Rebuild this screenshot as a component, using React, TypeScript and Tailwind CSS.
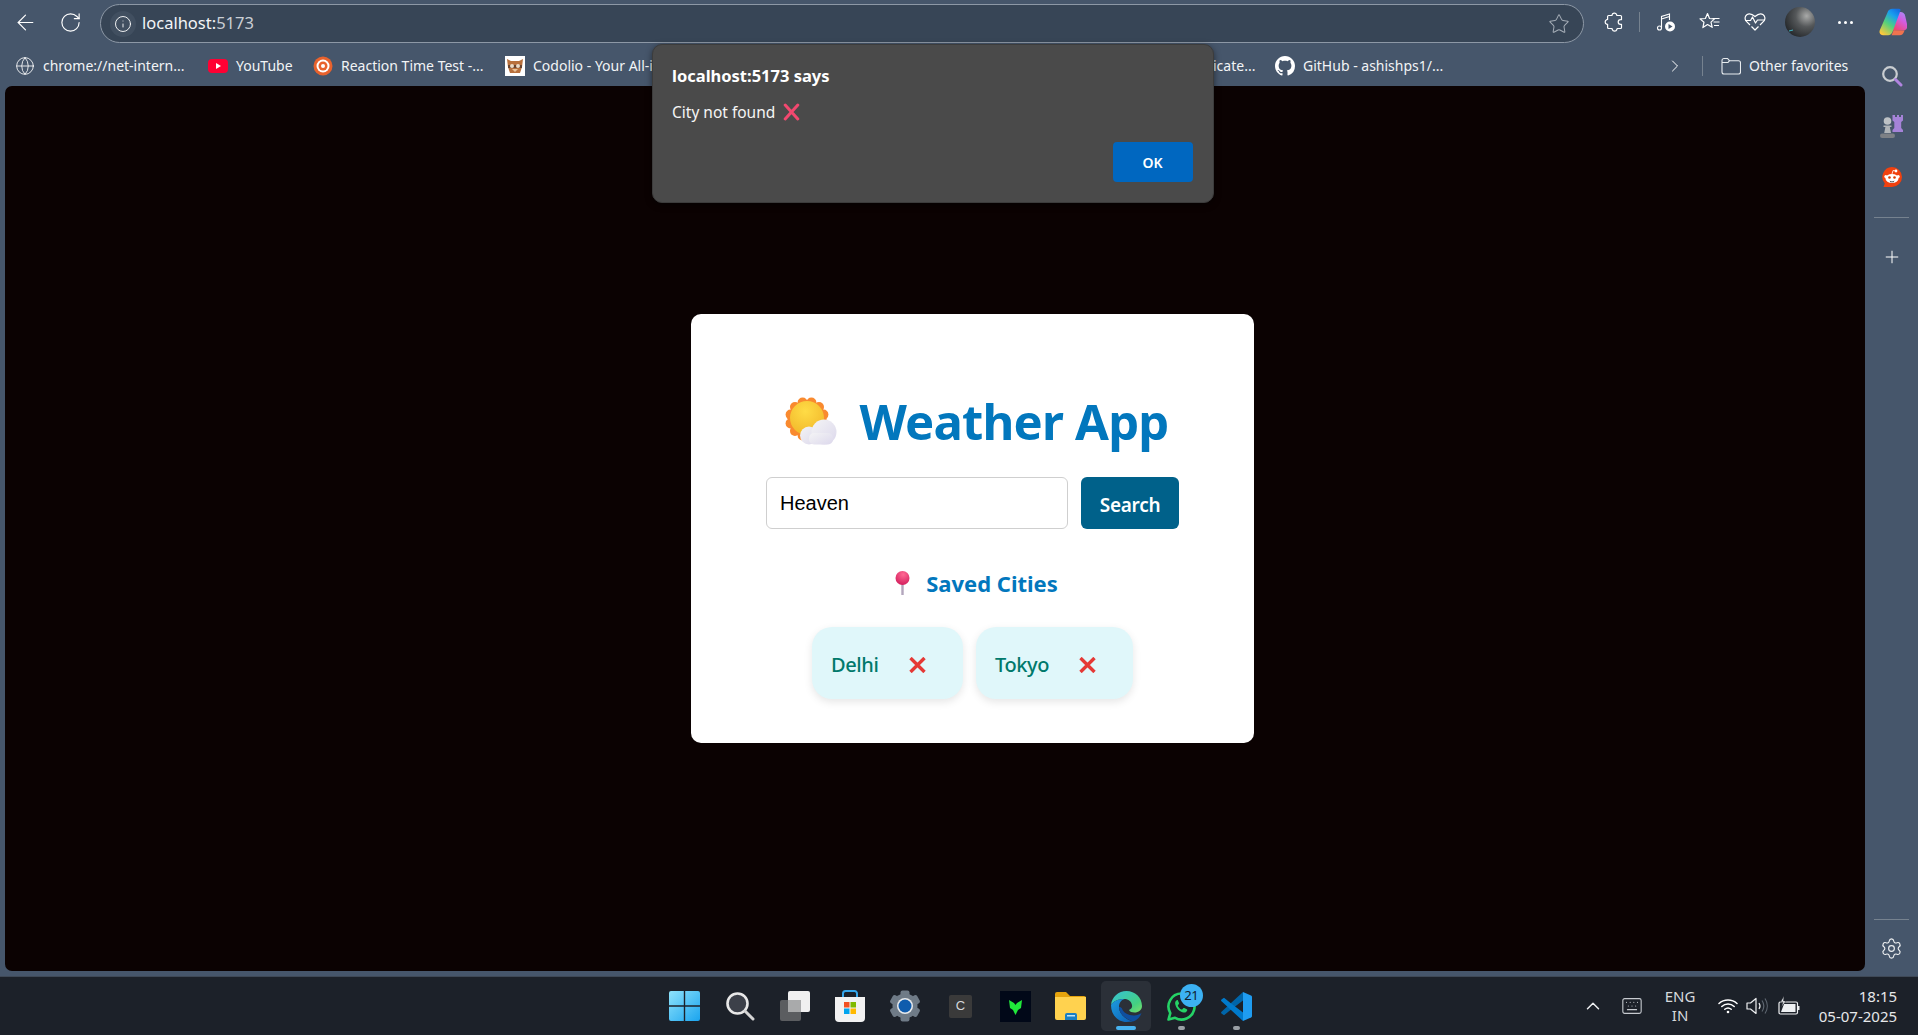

import React from "react";
import { ArrowLeft, RotateCw, Info, Star, Globe, ChevronRight, Plus, Settings, ChevronUp, Keyboard } from "lucide-react";

const ui = "font-['Noto_Sans','Open_Sans',sans-serif]";

function Bookmark({ icon, label, w }: { icon: React.ReactNode; label: string; w: string }) {
  return (
    <div className={`flex items-center gap-2 shrink-0 text-[14px] text-[#f2f4f6] whitespace-nowrap ${w}`}>
      <span className="w-5 h-5 flex items-center justify-center shrink-0">{icon}</span>
      <span>{label}</span>
    </div>
  );
}

function YouTube() {
  return (
    <svg width="20" height="20" viewBox="0 0 20 20">
      <rect x="0" y="3" width="20" height="14" rx="4" fill="#ff0033" />
      <path d="M8 7l5 3-5 3z" fill="#fff" />
    </svg>
  );
}
function Target() {
  return (
    <svg width="20" height="20" viewBox="0 0 20 20">
      <circle cx="10" cy="10" r="9.5" fill="#e8622d" />
      <circle cx="10" cy="10" r="6.5" fill="#fff" />
      <circle cx="10" cy="10" r="4.5" fill="#e8622d" />
      <circle cx="10" cy="10" r="2" fill="#fff" />
    </svg>
  );
}
function Owl() {
  return (
    <svg width="20" height="20" viewBox="0 0 20 20">
      <rect width="20" height="20" fill="#fff" />
      <path d="M2 3l4 2h8l4-2-1 8-2 6H5l-2-6z" fill="#b8703c" />
      <path d="M3 9h14v3H3z" fill="#6b4630" />
      <circle cx="7" cy="10" r="2" fill="#eadbc8" />
      <circle cx="13" cy="10" r="2" fill="#eadbc8" />
      <path d="M7 13h6l-3 3z" fill="#e9c39a" />
    </svg>
  );
}
function GitHub() {
  return (
    <svg width="20" height="20" viewBox="0 0 16 16" fill="#fff">
      <path d="M8 0C3.58 0 0 3.58 0 8c0 3.54 2.29 6.53 5.47 7.59.4.07.55-.17.55-.38 0-.19-.01-.82-.01-1.49-2.01.37-2.53-.49-2.69-.94-.09-.23-.48-.94-.82-1.13-.28-.15-.68-.52-.01-.53.63-.01 1.08.58 1.23.82.72 1.21 1.87.87 2.33.66.07-.52.28-.87.51-1.07-1.78-.2-3.64-.89-3.64-3.95 0-.87.31-1.59.82-2.15-.08-.2-.36-1.02.08-2.12 0 0 .67-.21 2.2.82.64-.18 1.32-.27 2-.27s1.36.09 2 .27c1.53-1.04 2.2-.82 2.2-.82.44 1.1.16 1.92.08 2.12.51.56.82 1.27.82 2.15 0 3.07-1.87 3.75-3.65 3.95.29.25.54.73.54 1.48 0 1.07-.01 1.93-.01 2.2 0 .21.15.46.55.38A8.01 8.01 0 0 0 16 8c0-4.42-3.58-8-8-8z" />
    </svg>
  );
}
function FolderLine() {
  return (
    <svg width="20" height="18" viewBox="0 0 20 18" fill="none" stroke="#e8ecef" strokeWidth="1.1">
      <path d="M1 3.5A2 2 0 0 1 3 1.5h3.5l2 2.2H17.5a2 2 0 0 1 2 2V15a2 2 0 0 1-2 2H3a2 2 0 0 1-2-2z" />
      <path d="M1 5.5h6l1.500-1.800" />
    </svg>
  );
}
function MusicPlay() {
  return (
    <svg width="20" height="20" viewBox="0 0 20 20" fill="none" stroke="#fff" strokeWidth="1.1">
      <circle cx="3.500" cy="16" r="2" />
      <path d="M5.500 16V4.500l8-2.500v6M5.500 7l8-2.500" />
      <circle cx="14" cy="14.500" r="5" fill="#fff" stroke="none" />
      <path d="M12.500 12l4 2.500-4 2.500z" fill="#46566b" stroke="none" />
    </svg>
  );
}
function StarList() {
  return (
    <svg width="22" height="20" viewBox="0 0 22 20" fill="none" stroke="#fff" strokeWidth="1.200">
      <path d="M8.500 1.500l2 5 5 .4-3.500 3.200 1.200 5.200-4.700-2.700-4.600 3 1.100-5.400L1 6.900l5.400-.4z" strokeLinejoin="round" />
      <path d="M13.500 6.500h7M14.500 10h6M15 13.500h5" />
    </svg>
  );
}
function HeartCheck() {
  return (
    <svg width="22" height="20" viewBox="0 0 22 20" fill="none" stroke="#fff" strokeWidth="1.200" strokeLinejoin="round">
      <path d="M6 13L2.200 9.200C0.500 7.200.8 4.200 2.800 2.700 5 1.200 8 1.800 11 4.500c3-2.700 6-3.300 8.200-1.800 2 1.500 2.300 4.500.6 6.500L16 13" />
      <path d="M1 8.500h5.500L8.500 5l3 6 2-3H21" />
      <path d="M7.500 14.500L11 18l3.500-3.500" />
    </svg>
  );
}
function Puzzle2() {
  return (
    <svg width="20" height="20" viewBox="0 0 20 20" fill="none" stroke="#fff" strokeWidth="1.200" strokeLinejoin="round">
      <path d="M8 3.200a2.400 2.400 0 0 1 4.600-.6l.3.9h3.600a1 1 0 0 1 1 1v3.100l-1 .1a2.300 2.300 0 0 0 0 4.600l1 .1v3.100a1 1 0 0 1-1 1h-3.400l-.2 1a2.400 2.400 0 0 1-4.600 0l-.3-1H4.600a1 1 0 0 1-1-1v-3.200l-1-.2a2.400 2.400 0 0 1 0-4.400l1-.2V4.500a1 1 0 0 1 1-1h3.400z" />
    </svg>
  );
}
function Avatar() {
  return (
    <svg width="30" height="30" viewBox="0 0 30 30">
      <defs>
        <radialGradient id="av" cx="0.72" cy="0.3" r="0.8">
          <stop offset="0" stopColor="#a9aaa9" />
          <stop offset="0.45" stopColor="#55585a" />
          <stop offset="1" stopColor="#25282b" />
        </radialGradient>
      </defs>
      <circle cx="15" cy="15" r="15" fill="url(#av)" />
      <path d="M4 24l4-1" stroke="#3fb6c4" strokeWidth="1" />
    </svg>
  );
}
function Copilot() {
  return (
    <svg width="28" height="28" viewBox="0 0 28 28">
      <defs>
        <linearGradient id="cpa" x1="0.2" y1="1" x2="0.8" y2="0">
          <stop offset="0" stopColor="#ffc83c" />
          <stop offset="0.4" stopColor="#56d17a" />
          <stop offset="0.75" stopColor="#18a0ee" />
          <stop offset="1" stopColor="#1470e6" />
        </linearGradient>
        <linearGradient id="cpb" x1="0.2" y1="1" x2="0.8" y2="0">
          <stop offset="0" stopColor="#f1456a" />
          <stop offset="0.6" stopColor="#d35ce0" />
          <stop offset="1" stopColor="#a78cf7" />
        </linearGradient>
      </defs>
      <path d="M19 4h2.500c2.500 0 4 1.500 4.700 4l2 9c.6 3-1 5.500-4 5.500H13z" fill="url(#cpb)" />
      <path d="M8.500 4.500C9.300 2 11 .8 13.500.8h6.300c1.500 0 2 .9 1.500 2.200L13.500 24c-.8 2-2.200 3.200-4.300 3.200H4C1.300 27.200 0 25 .7 22.500z" fill="url(#cpa)" />
      <path d="M12.500 27.200h8.300c2 0 3.200-1 4-3l.8-1.800-11-.2z" fill="#f0734f" />
    </svg>
  );
}
function SearchColor() {
  return (
    <svg width="22" height="22" viewBox="0 0 22 22" fill="none">
      <circle cx="9" cy="9" r="6.800" stroke="#c9cdd1" strokeWidth="2.200" />
      <path d="M14.500 14.500L20 20" stroke="#b184e0" strokeWidth="3" strokeLinecap="round" />
    </svg>
  );
}
function Chess() {
  return (
    <svg width="23" height="23" viewBox="0 0 23 23">
      <path d="M12.500 0h2.500v2h2V0h2v2h2V0h2v5.500l-1.800 1.500v6l1.800 2v2H12.500v-2l1.800-2V7l-1.800-1.500z" fill="#a583d8" />
      <circle cx="7.500" cy="6" r="3.800" fill="#bdc1c5" />
      <path d="M3.500 10.500h8v1.500H9.800l1.200 6H4.200l1.200-6H3.500z" fill="#b0b4b8" />
      <rect x="0" y="18.500" width="15" height="4.500" rx="2.200" fill="#7d8085" />
    </svg>
  );
}
function Reddit() {
  return (
    <svg width="20" height="20" viewBox="0 0 20 20">
      <path d="M10 0a10 10 0 0 1 0 20H1.500l1.300-3.500A10 10 0 0 1 10 0z" fill="#f1410f" />
      <ellipse cx="10" cy="11.500" rx="6.500" ry="4.500" fill="#fff" />
      <circle cx="3.800" cy="9.500" r="1.500" fill="#fff" />
      <circle cx="16.200" cy="9.500" r="1.500" fill="#fff" />
      <circle cx="14" cy="4" r="1.400" fill="#fff" />
      <path d="M10 7l1-3.500 3 .5" stroke="#fff" strokeWidth="0.800" fill="none" />
      <circle cx="7.500" cy="10.500" r="1.300" fill="#d93a00" />
      <circle cx="12.500" cy="10.500" r="1.300" fill="#d93a00" />
      <path d="M7.500 13.500c1.500 1.200 3.500 1.200 5 0l-1 1.800h-3z" fill="#333" />
    </svg>
  );
}
function AlertX() {
  return (
    <svg width="17" height="18" viewBox="0 0 17 18" fill="none" stroke="#f2486f" strokeWidth="3" strokeLinecap="round">
      <path d="M2.200 2l12.600 14M14.800 2L2.200 16" />
    </svg>
  );
}
function SunCloud() {
  const pts = Array.from({ length: 12 }, (_, i) => i * 30 + 15);
  return (
    <svg width="52" height="48" viewBox="0 0 52 48">
      <defs>
        <radialGradient id="sun" cx="0.45" cy="0.3" r="0.8">
          <stop offset="0" stopColor="#ffdc46" />
          <stop offset="1" stopColor="#f0b428" />
        </radialGradient>
        <linearGradient id="cl" x1="0" y1="0" x2="1" y2="1">
          <stop offset="0" stopColor="#f4f4f5" />
          <stop offset="1" stopColor="#dcd8ec" />
        </linearGradient>
      </defs>
      <g fill="#f98a2f">
        <circle cx="22" cy="22" r="18.500" />
        {pts.map((a) => (
          <circle key={a} cx={22 + 17 * Math.cos((a * Math.PI) / 180)} cy={22 + 17 * Math.sin((a * Math.PI) / 180)} r="5" />
        ))}
      </g>
      <circle cx="22" cy="21" r="17" fill="url(#sun)" />
      <g fill="url(#cl)">
        <circle cx="24" cy="38.500" r="9" />
        <circle cx="39" cy="35" r="12.500" />
        <rect x="24" y="36" width="24" height="11.500" rx="5" />
      </g>
    </svg>
  );
}
function Pin() {
  return (
    <svg width="17" height="24" viewBox="0 0 17 24">
      <defs>
        <radialGradient id="pin" cx="0.55" cy="0.25" r="0.8">
          <stop offset="0" stopColor="#ff6a94" />
          <stop offset="1" stopColor="#d11a5a" />
        </radialGradient>
      </defs>
      <rect x="7.300" y="10" width="2.400" height="14" fill="#b3a6bd" />
      <circle cx="8.500" cy="7" r="7" fill="url(#pin)" />
    </svg>
  );
}
function ChipX() {
  return (
    <svg width="17" height="16" viewBox="0 0 17 16" fill="none" stroke="#e53935" strokeWidth="3.400">
      <path d="M1.500 1l14 14M15.500 1l-14 14" />
    </svg>
  );
}

function Chip({ name, gap }: { name: string; gap: string }) {
  return (
    <div className={`h-[72px] pl-[19px] pt-[4px] rounded-[20px] bg-[#e0f7fa] flex items-center shadow-[0_3px_8px_rgba(0,0,0,0.1)] ${gap}`}>
      <span className="text-[20px] leading-none font-medium text-[#00796b] tracking-[-0.4px]">{name}</span>
      <ChipX />
    </div>
  );
}

function WinLogo() {
  return (
    <svg width="31" height="30" viewBox="0 0 31 30">
      <defs>
        <linearGradient id="wa" x1="0" y1="0" x2="1" y2="1">
          <stop offset="0" stopColor="#8fe3fb" />
          <stop offset="1" stopColor="#1aa4ef" />
        </linearGradient>
      </defs>
      <g fill="url(#wa)">
        <path d="M2 0h12.800v14.200H0V2a2 2 0 0 1 2-2zM16.200 0H29a2 2 0 0 1 2 2v12.200H16.200zM0 15.800h14.800V30H2a2 2 0 0 1-2-2zM16.200 15.800H31V28a2 2 0 0 1-2 2H16.200z" />
      </g>
    </svg>
  );
}
function TbSearch() {
  return (
    <svg width="30" height="30" viewBox="0 0 30 30" fill="none">
      <circle cx="12.500" cy="12.500" r="10" stroke="#e8e8e8" strokeWidth="2.600" fill="#3c4049" />
      <path d="M20 20l8 8" stroke="#d5d5d5" strokeWidth="3" strokeLinecap="round" />
    </svg>
  );
}
function TaskView() {
  return (
    <svg width="30" height="30" viewBox="0 0 30 30">
      <rect x="0" y="9" width="21" height="21" rx="2" fill="#5b5d60" />
      <rect x="8" y="0" width="22" height="21" rx="2" fill="#f0f0f0" />
      <rect x="8" y="9" width="13" height="12" fill="#a9aaab" />
    </svg>
  );
}
function Store() {
  return (
    <svg width="30" height="32" viewBox="0 0 30 32">
      <path d="M8 7V3.500A2.500 2.500 0 0 1 10.500 1h9A2.500 2.500 0 0 1 22 3.500V7" fill="none" stroke="#35a7ec" strokeWidth="2" />
      <path d="M0 7h30v21a4 4 0 0 1-4 4H4a4 4 0 0 1-4-4z" fill="#f2f2f2" />
      <rect x="9" y="12" width="5.500" height="5.500" fill="#f25022" />
      <rect x="15.500" y="12" width="5.500" height="5.500" fill="#7fba00" />
      <rect x="9" y="18.500" width="5.500" height="5.500" fill="#00a4ef" />
      <rect x="15.500" y="18.500" width="5.500" height="5.500" fill="#ffb900" />
    </svg>
  );
}
function WinSettings() {
  const a = [0, 60, 120, 180, 240, 300];
  return (
    <svg width="32" height="32" viewBox="0 0 32 32">
      <g fill="#6f7b87">
        {a.map((d) => (
          <rect key={d} x="11.500" y="0.500" width="9" height="8" rx="2" transform={`rotate(${d} 16 16)`} />
        ))}
        <circle cx="16" cy="16" r="12.500" />
      </g>
      <circle cx="16" cy="16" r="8" fill="#e8eaec" />
      <circle cx="16" cy="16" r="6.500" fill="#0f5cad" />
    </svg>
  );
}
function CApp() {
  return (
    <div className="w-[23px] h-[23px] rounded-[2px] bg-[#3a3a3a] flex items-center justify-center text-[13px] text-[#d5d8dc] font-['Liberation_Sans',sans-serif]">
      C
    </div>
  );
}
function GreenApp() {
  return (
    <svg width="31" height="31" viewBox="0 0 31 31">
      <rect width="31" height="31" fill="#010818" />
      <path d="M9 9l5 3 1.500 2 1.500-2 5-3-1 8-3 2-2.500 5-2.500-5-3-2z" fill="#20e83a" />
    </svg>
  );
}
function FileFolder() {
  return (
    <svg width="31" height="28" viewBox="0 0 31 28">
      <path d="M0 2a2 2 0 0 1 2-2h9l4 4h14a2 2 0 0 1 2 2v4H0z" fill="#e5a30c" />
      <path d="M0 5h31v21a2 2 0 0 1-2 2H2a2 2 0 0 1-2-2z" fill="#ffd24f" />
      <path d="M10 28v-5a2 2 0 0 1 2-2h8a2 2 0 0 1 2 2v5z" fill="#1a7fc4" />
      <rect x="12" y="23" width="8" height="1.500" fill="#bfe3f7" />
    </svg>
  );
}
function Edge() {
  return (
    <svg width="31" height="31" viewBox="0 0 31 31">
      <defs>
        <linearGradient id="e1" x1="0" y1="0" x2="1" y2="1">
          <stop offset="0" stopColor="#36c1d8" />
          <stop offset="0.7" stopColor="#44d181" />
          <stop offset="1" stopColor="#7ee06a" />
        </linearGradient>
        <linearGradient id="e2" x1="0" y1="0" x2="1" y2="1">
          <stop offset="0" stopColor="#1d9ce0" />
          <stop offset="1" stopColor="#0c5fb4" />
        </linearGradient>
      </defs>
      <path d="M15.500 0C24 0 31 6.500 31 15c0 4-3.500 6.500-7.500 6.500-2.500 0-5-.8-5.500-2.500 2.500-1 3.500-3 3-5-.7-3.500-3.500-6-7.500-6C7.500 8 2.500 10 0 14 .8 6 7.500 0 15.500 0z" fill="url(#e1)" />
      <path d="M0 14c2.500-4 7.500-6 13.500-6 -3.500 1-5.500 4-5.500 8 0 6.500 5.500 12 14 14.500-2 .3-4 .5-6.500.5C7 31 0 24 0 14z" fill="url(#e2)" />
      <path d="M8 16c0 6 5 11.500 14 14.500 3.500-1 7-4 8.500-8.500-2 1.500-4.500 2.500-7.500 2.500-6 0-11-3-12-7-.8-1.500-2-1.500-3-1.500z" fill="#0f4f9f" />
    </svg>
  );
}
function WhatsApp() {
  return (
    <svg width="31" height="31" viewBox="0 0 31 31">
      <path d="M15.500 2.500a13 13 0 0 0-11.200 19.600L2.500 28.500l6.600-1.700A13 13 0 1 0 15.500 2.500z" fill="#1c2129" stroke="#25d366" strokeWidth="2.600" strokeLinejoin="round" />
      <path d="M11 9c-1.300.7-2.200 2-1.800 4 .8 4 4 7.500 8 8.500 2 .4 3.500-.5 4-2 .2-.8 0-1-.5-1.300l-2.400-1.200c-.5-.2-.8-.1-1.100.3l-.8 1c-.3.3-.6.300-1 .1-1.600-.7-2.800-1.900-3.500-3.500-.2-.4-.1-.7.2-1l.7-.8c.3-.3.3-.7.200-1l-1-2.400C12.200 9 11.700 8.700 11 9z" fill="#25d366" />
    </svg>
  );
}
function VSCode() {
  return (
    <svg width="31" height="31" viewBox="0 0 31 31">
      <path d="M22 1l8 3.500c.6.300 1 .8 1 1.500v19c0 .7-.4 1.200-1 1.500L22 30z" fill="#1f9cf0" />
      <path d="M22 1v8.500L9.500 19 3 24.200 0.500 22.500c-.6-.5-.6-1.300 0-1.800L22 1z" fill="#0065a9" />
      <path d="M22 30v-8.500L9.500 12 3 6.800 0.500 8.500c-.6.500-.6 1.300 0 1.800L22 30z" fill="#007acc" />
    </svg>
  );
}
function TbItem({ children, active, dot, badge }: { children: React.ReactNode; active?: boolean; dot?: boolean; badge?: boolean }) {
  return (
    <div className="relative w-[55.2px] h-[50px] flex items-center justify-center">
      {active && <div className="absolute left-[2.500px] top-0 w-[50px] h-[50px] rounded-[5px] bg-[#2b3038]" />}
      <div className="relative flex items-center justify-center">{children}</div>
      {active && <div className="absolute left-[17.500px] bottom-[1px] w-5 h-[4px] rounded-full bg-[#47b3f0]" />}
      {dot && <div className="absolute left-[24px] bottom-[1px] w-[7px] h-[4px] rounded-full bg-[#9aa0a6]" />}
      {badge && (
        <div className="absolute left-[26px] top-[3px] w-[23px] h-[23px] rounded-full bg-[#3cb1f3] flex items-center justify-center text-[13px] tracking-[-0.5px] text-[#10202e]">
          21
        </div>
      )}
    </div>
  );
}
function WifiIcon() {
  return (
    <svg width="20" height="16" viewBox="0 0 20 16" fill="none" stroke="#fff" strokeWidth="1.500" strokeLinecap="round">
      <path d="M1 5.500c5-4.700 13-4.700 18 0M3.800 8.500c3.500-3.200 8.900-3.200 12.400 0M6.800 11.300c1.900-1.600 4.500-1.600 6.400 0" />
      <circle cx="10" cy="14" r="1.300" fill="#fff" stroke="none" />
    </svg>
  );
}
function Speaker() {
  return (
    <svg width="22" height="20" viewBox="0 0 22 20" fill="none" stroke="#eef0f2" strokeWidth="1.200">
      <path d="M1 7h3.500L10 2.500v15L4.500 13H1z" strokeLinejoin="round" />
      <path d="M13 7c1.200 1.800 1.200 4.200 0 6" />
      <path d="M16 4.500c2.200 3.300 2.200 7.700 0 11M19 2.500c3 4.500 3 10.500 0 15" stroke="#5e6670" />
    </svg>
  );
}
function Battery() {
  return (
    <svg width="22" height="20" viewBox="0 0 22 20">
      <path d="M2 6h16a1.500 1.500 0 0 1 1.500 1.500v9A1.500 1.500 0 0 1 18 18H2.500A1.500 1.500 0 0 1 1 16.500V7.500A1.500 1.500 0 0 1 2 6z" fill="none" stroke="#eef0f2" strokeWidth="1.200" />
      <path d="M3 16l3-8h11.500v8z" fill="#eef0f2" />
      <rect x="20" y="10" width="1.500" height="4" fill="#eef0f2" />
      <path d="M6 0L2.500 6H5L3.500 11 8 5H5.500z" fill="#eef0f2" stroke="#1c2129" strokeWidth="0.500" />
    </svg>
  );
}

export default function App() {
  return (
    <div className={`relative w-[1918px] h-[1035px] overflow-hidden flex flex-col bg-[#46566b] ${ui}`}>
      {/* toolbar */}
      <div className="h-[44px] flex items-center shrink-0">
        <div className="w-[50px] shrink-0 flex justify-center">
          <ArrowLeft size={25} strokeWidth={1.1} color="#fff" />
        </div>
        <div className="w-[40px] shrink-0 flex justify-center">
          <RotateCw size={23} strokeWidth={1.2} color="#fff" />
        </div>
        <div className="ml-[10px] mt-[3px] w-[1484px] shrink-0 h-[39px] rounded-full border border-[#8d98a6] bg-[#374556] flex items-center pl-[9px] pr-[13px]">
          <div className="w-[26px] h-[26px] rounded-full bg-[#414f60] flex items-center justify-center">
            <Info size={18} strokeWidth={1.2} color="#fff" />
          </div>
          <span className="ml-[6px] text-[16.500px] text-[#f2f4f6]">localhost:<span className="text-[#c9ced5]">5173</span></span>
          <div className="ml-auto">
            <Star size={22} strokeWidth={1.1} color="#a5adb7" />
          </div>
        </div>
        <div className="w-[55px] shrink-0 pl-[20px] flex"><Puzzle2 /></div>
        <div className="w-px shrink-0 h-[20px] bg-[#76828f]" />
        <div className="w-[52px] shrink-0 flex justify-center"><MusicPlay /></div>
        <div className="w-[36px] shrink-0 flex justify-center"><StarList /></div>
        <div className="w-[54px] shrink-0 flex justify-center"><HeartCheck /></div>
        <div className="w-[36px] shrink-0 flex justify-center"><Avatar /></div>
        <div className="w-[54px] shrink-0 flex justify-center gap-[3px]">
          <i className="w-[3px] h-[3px] rounded-full bg-white" />
          <i className="w-[3px] h-[3px] rounded-full bg-white" />
          <i className="w-[3px] h-[3px] rounded-full bg-white" />
        </div>
        <div className="w-[42px] shrink-0 flex justify-center"><Copilot /></div>
      </div>

      <div className="flex-1 flex min-h-0">
        <div className="flex-1 flex flex-col min-w-0">
          {/* bookmarks */}
          <div className="h-[42px] pl-[15px] pt-[1px] flex items-center shrink-0 overflow-hidden">
            <Bookmark w="w-[193px]" icon={<Globe size={20} strokeWidth={1} color="#fff" />} label="chrome://net-intern..." />
            <Bookmark w="w-[105px]" icon={<YouTube />} label="YouTube" />
            <Bookmark w="w-[192px]" icon={<Target />} label="Reaction Time Test -..." />
            <Bookmark w="w-[708px]" icon={<Owl />} label="Codolio - Your All-in-One" />
            <span className="w-[41px] shrink-0 text-[14px] text-[#f2f4f6] whitespace-nowrap">icate...</span>
            <div className="w-[21px] shrink-0" />
            <Bookmark w="w-[390px]" icon={<GitHub />} label="GitHub - ashishps1/..." />
            <div className="w-[20px] shrink-0"><ChevronRight size={20} strokeWidth={1.2} color="#fff" /></div>
            <div className="ml-[17px] mr-[18px] w-px shrink-0 h-[20px] bg-[#76828f]" />
            <div className="flex items-center gap-2 text-[14px] text-[#f2f4f6] whitespace-nowrap shrink-0">
              <FolderLine />
              <span>Other favorites</span>
            </div>
          </div>
          {/* page */}
          <div className="ml-[5px] flex-1 rounded-[7px] bg-[#0b0202] flex items-center pl-[686px]">
            <div className="w-[563px] h-[429px] rounded-[10px] bg-white flex flex-col items-center pt-[70px]">
              <div className="flex items-center h-[74px] pl-[9px]">
                <SunCloud />
                <h1 className="ml-[22px] text-[49px] leading-none font-bold tracking-[-0.8px] text-[#0277bd]">Weather App</h1>
              </div>
              <div className="mt-[19px] flex gap-[13px]">
                <div className="w-[302px] h-[52px] rounded-[6px] border border-[#cfcfcf] flex items-center px-[13px] text-[20px] text-black font-['Liberation_Sans',sans-serif]">
                  Heaven
                </div>
                <div className="w-[98px] h-[52px] rounded-[6px] bg-[#00618a] text-white text-[19px] font-semibold tracking-[-0.3px] flex items-center justify-center pt-[5px]">
                  Search
                </div>
              </div>
              <div className="mt-[40px] h-[28px] pl-[7px] flex items-center">
                <Pin />
                <span className="ml-[15px] text-[22px] font-bold text-[#0277bd]">Saved Cities</span>
              </div>
              <div className="mt-[30px] flex gap-[13px]">
                <Chip name="Delhi" gap="gap-[31px] w-[151px]" />
                <Chip name="Tokyo" gap="gap-[30px] w-[157px]" />
              </div>
            </div>
          </div>
        </div>
        {/* sidebar */}
        <div className="w-[53px] shrink-0 flex flex-col items-center">
          <div className="h-[20px]" />
          <div className="h-[24px] flex items-center"><SearchColor /></div>
          <div className="mt-[26px] h-[24px] flex items-center"><Chess /></div>
          <div className="mt-[28px] h-[22px] flex items-center"><Reddit /></div>
          <div className="mt-[29px] w-[35px] h-px bg-[#76828f]" />
          <div className="mt-[29px]"><Plus size={20} strokeWidth={1.2} color="#fff" /></div>
          <div className="mt-auto w-[35px] h-px bg-[#76828f]" />
          <div className="mt-[17px] mb-[11px]"><Settings size={23} strokeWidth={1.2} color="#eef0f2" /></div>
        </div>
      </div>

      {/* taskbar */}
      <div className="mt-[5px] h-[59px] shrink-0 bg-[#1c2129] border-t border-[#3f4957] flex items-start pt-[4px]">
        <div className="ml-[657px] flex shrink-0">
          <TbItem><WinLogo /></TbItem>
          <TbItem><TbSearch /></TbItem>
          <TbItem><TaskView /></TbItem>
          <TbItem><Store /></TbItem>
          <TbItem><WinSettings /></TbItem>
          <TbItem><CApp /></TbItem>
          <TbItem><GreenApp /></TbItem>
          <TbItem><FileFolder /></TbItem>
          <TbItem active><Edge /></TbItem>
          <TbItem dot badge><WhatsApp /></TbItem>
          <TbItem dot><VSCode /></TbItem>
        </div>
        <div className="ml-[318px] h-[50px] flex items-center text-[#e6e8ea] text-[15px] shrink-0">
          <ChevronUp size={22} strokeWidth={1.6} color="#eef0f2" />
          <div className="ml-[17px]"><Keyboard size={22} strokeWidth={1.2} color="#c7cbd0" /></div>
          <div className="ml-[19px] w-[36px] text-center leading-[19px] text-[#d6d9dc]">ENG<br />IN</div>
          <div className="ml-[20px]"><WifiIcon /></div>
          <div className="ml-[8px]"><Speaker /></div>
          <div className="ml-[10px]"><Battery /></div>
          <div className="ml-[1px] w-[96px] text-right leading-[20px] whitespace-nowrap">18:15<br />05-07-2025</div>
        </div>
      </div>

      {/* alert dialog */}
      <div className="absolute left-[652px] top-[44px] w-[562px] h-[159px] rounded-[10px] bg-[#4a4a4a] border border-[#3c3c3c] shadow-[0_2px_6px_rgba(0,0,0,0.5)] pl-[19px] pt-[19px]">
        <div className="text-[16.500px] font-bold text-white leading-[24px]">localhost:5173 says</div>
        <div className="mt-[12px] flex items-center gap-[8px] text-[15.500px] text-[#f5f5f5] leading-[24px]">
          City not found <AlertX />
        </div>
        <div className="absolute right-[20px] bottom-[20px] w-[80px] h-[40px] rounded-[4px] bg-[#0067c0] flex items-center justify-center pr-[1px] text-[14px] font-semibold text-white">
          OK
        </div>
      </div>
    </div>
  );
}
